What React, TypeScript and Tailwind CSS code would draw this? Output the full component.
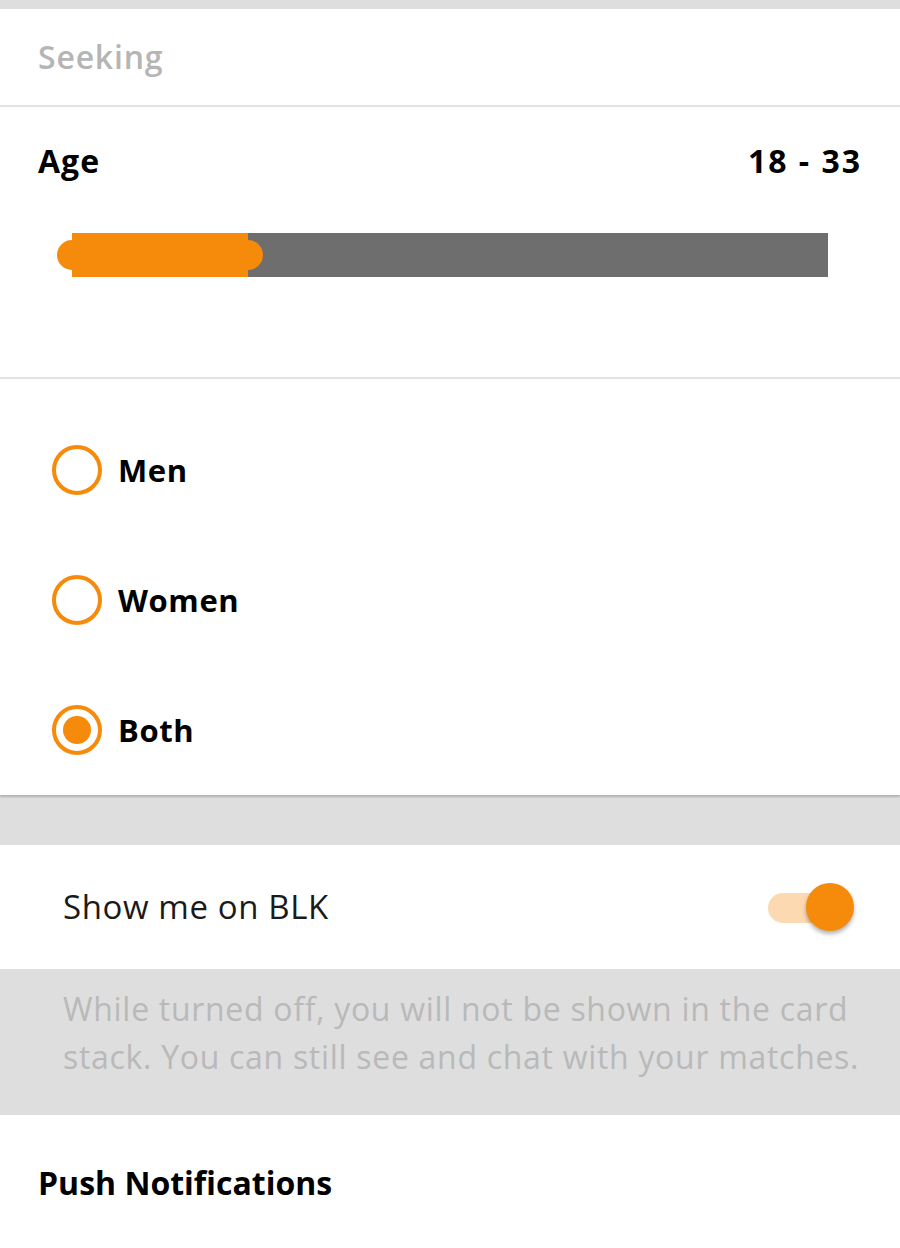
const font = { fontFamily: '"Open Sans", "Noto Sans", sans-serif' };

function Radio({ label, checked }: { label: string; checked?: boolean }) {
  return (
    <div className="flex h-[130px] items-center pl-[52px]">
      <div className="flex h-[50px] w-[50px] items-center justify-center rounded-full border-[4px] border-[#f68a0a]">
        {checked && <div className="h-[28px] w-[28px] rounded-full bg-[#f68a0a]" />}
      </div>
      <span className="ml-[16px] text-[31px] font-bold tracking-[0.6px] text-black">{label}</span>
    </div>
  );
}

export default function App() {
  return (
    <div className="w-[900px] h-[1248px] overflow-hidden bg-[#dedede]" style={font}>
      <div className="h-[9px]" />
      <div className="flex h-[98px] items-center bg-white px-[38px] border-b-2 border-[#e2e2e2]">
        <span className="text-[32px] font-semibold tracking-[0.8px] text-[#b5b5b5]">Seeking</span>
      </div>

      <div className="h-[272px] bg-white border-b-2 border-[#e2e2e2]">
        <div className="flex items-center justify-between px-[38px] pt-[30px]">
          <span className="text-[32px] font-bold tracking-[1px] text-black">Age</span>
          <span className="text-[32px] font-bold tracking-[2px] text-black">18 - 33</span>
        </div>
        <div className="relative mx-[72px] mt-[48px] h-[44px] w-[756px] bg-[#6e6e6e]">
          <div className="absolute left-0 top-0 h-[44px] w-[176px] bg-[#f68a0a]" />
          <div className="absolute left-[-15px] top-[7px] h-[30px] w-[30px] rounded-full bg-[#f68a0a]" />
          <div className="absolute left-[161px] top-[7px] h-[30px] w-[30px] rounded-full bg-[#f68a0a]" />
        </div>
      </div>

      <div className="bg-white pt-[26px] shadow-[0_2px_2px_rgba(0,0,0,0.2)]">
        <Radio label="Men" />
        <Radio label="Women" />
        <Radio label="Both" checked />
      </div>

      <div className="h-[50px]" />

      <div className="flex h-[124px] items-center justify-between bg-white pl-[63px] pr-[46px]">
        <span className="text-[33px] tracking-[0.6px] text-[#1a1a1a]">Show me on BLK</span>
        <div className="relative h-[48px] w-[86px]">
          <div className="absolute left-0 top-[10px] h-[30px] w-[72px] rounded-full bg-[#fcd9b0]" />
          <div className="absolute right-0 top-0 h-[48px] w-[48px] rounded-full bg-[#f68a0a] shadow-[0_3px_4px_rgba(0,0,0,0.3)]" />
        </div>
      </div>

      <div className="h-[146px] pl-[63px] pt-[16px]">
        <p className="whitespace-nowrap text-[32px] leading-[48px] tracking-[0.7px] text-[#b9b9b9]">
          While turned off, you will not be shown in the card
          <br />
          stack. You can still see and chat with your matches.
        </p>
      </div>

      <div className="h-[140px] bg-white px-[38px] pt-[44px]">
        <span className="text-[32px] font-bold text-black">Push Notifications</span>
      </div>
    </div>
  );
}
